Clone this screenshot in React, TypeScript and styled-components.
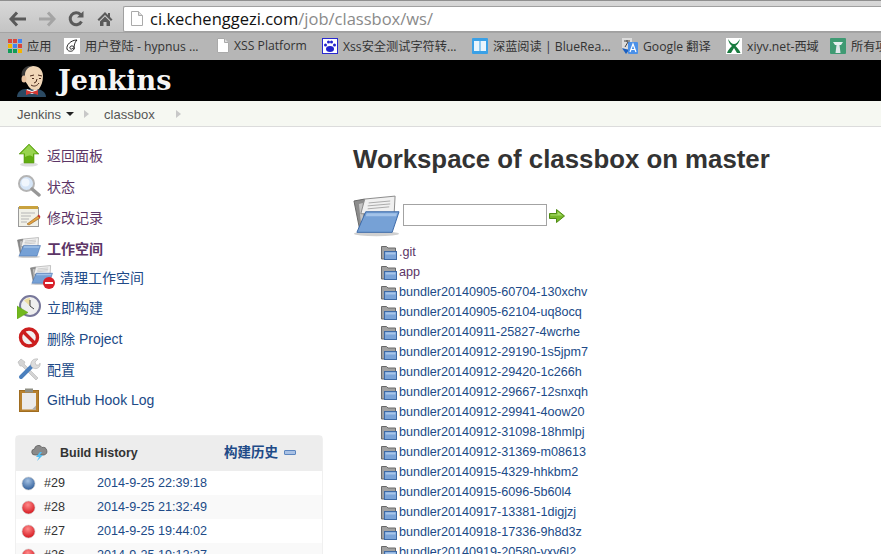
import React from "react"
import styled, { createGlobalStyle } from "styled-components"

const sans = `"Liberation Sans", Arial, "Noto Sans CJK SC", sans-serif`

const GlobalStyle = createGlobalStyle`
  html, body {
    margin: 0;
    padding: 0;
    height: 554px;
    overflow: hidden;
    background: #fff;
    font-family: ${sans};
  }
`

const files = [
  ".git",
  "app",
  "bundler20140905-60704-130xchv",
  "bundler20140905-62104-uq8ocq",
  "bundler20140911-25827-4wcrhe",
  "bundler20140912-29190-1s5jpm7",
  "bundler20140912-29420-1c266h",
  "bundler20140912-29667-12snxqh",
  "bundler20140912-29941-4oow20",
  "bundler20140912-31098-18hmlpj",
  "bundler20140912-31369-m08613",
  "bundler20140915-4329-hhkbm2",
  "bundler20140915-6096-5b60l4",
  "bundler20140917-13381-1digjzj",
  "bundler20140918-17336-9h8d3z",
  "bundler20140919-20580-yxy6l2",
]

const builds = [
  { id: "#29", date: "2014-9-25 22:39:18", ball: "blue" },
  { id: "#28", date: "2014-9-25 21:32:49", ball: "red" },
  { id: "#27", date: "2014-9-25 19:44:02", ball: "red" },
  { id: "#26", date: "2014-9-25 19:12:27", ball: "red" },
]

const Page = styled.div`
  width: 881px;
  height: 554px;
  overflow: hidden;
  display: flex;
  flex-direction: column;
`

/* browser chrome */
const Toolbar = styled.div`
  height: 32px;
  flex: none;
  box-sizing: border-box;
  border-top: 1px solid #8f8f8f;
  background: linear-gradient(#d8d8d8, #c4c4c4);
  display: flex;
  align-items: center;
  padding: 4px 0 0 3px;
`
const NavButton = styled.div`
  width: 29px;
  height: 22px;
  display: flex;
  align-items: center;
  justify-content: center;
`
const AddressBar = styled.div`
  margin-left: 4px;
  flex: 1;
  height: 26px;
  box-sizing: border-box;
  background: #fff;
  border: 1px solid #a0a0a0;
  border-right: 0;
  border-radius: 2px 0 0 2px;
  display: flex;
  align-items: center;
  padding-left: 7px;
  gap: 7px;
  font-family: "Open Sans", sans-serif;
  font-size: 16.5px;
  color: #8a8a8a;
`
const Host = styled.span`
  color: #111;
`
const BookmarkBar = styled.div`
  height: 28px;
  flex: none;
  box-sizing: border-box;
  background: #b6b6b6;
  border-top: 1px solid #a4a4a4;
  display: flex;
  align-items: center;
  padding: 0 0 2px 8px;
  overflow: hidden;
`
const Bookmark = styled.div<{ $width: number }>`
  width: ${({ $width }) => $width}px;
  flex: none;
  display: flex;
  align-items: center;
  gap: 5px;
  font-family: "Open Sans", "Noto Sans CJK SC", sans-serif;
  font-size: 12.2px;
  color: #333;
  white-space: nowrap;
`

/* jenkins header */
const Header = styled.div`
  height: 41px;
  flex: none;
  background: #000;
  display: flex;
  align-items: center;
  padding-left: 17px;
  gap: 11px;
`
const Brand = styled.div`
  font-family: "DejaVu Serif", Georgia, serif;
  font-weight: bold;
  font-size: 27px;
  color: #f5f5f5;
  line-height: 1;
`
const Breadcrumbs = styled.div`
  height: 26px;
  flex: none;
  box-sizing: border-box;
  background: #f6f8f2;
  border-bottom: 1px solid #dcdcdc;
  display: flex;
  align-items: center;
  padding: 1px 0 0 17px;
  color: #555;
`
const Crumb = styled.span`
  font-size: 13px;
`
const Caret = styled.span`
  margin-left: 5px;
  border-left: 4px solid transparent;
  border-right: 4px solid transparent;
  border-top: 4px solid #222;
`
const Chevron = styled.span<{ $gap: number; $after: number }>`
  margin-left: ${({ $gap }) => $gap}px;
  margin-right: ${({ $after }) => $after}px;
  border-top: 4px solid transparent;
  border-bottom: 4px solid transparent;
  border-left: 5px solid #c8c8c8;
`

/* page body */
const Body = styled.div`
  flex: 1;
  display: flex;
  min-height: 0;
`
const Sidebar = styled.div`
  width: 353px;
  flex: none;
  box-sizing: border-box;
  padding: 12px 0 0 15px;
`
const Task = styled.div<{ $sub?: boolean }>`
  height: ${({ $sub }) => ($sub ? 29 : 31)}px;
  margin-top: ${({ $sub }) => ($sub ? -1 : 0)}px;
  padding-left: ${({ $sub }) => ($sub ? 15 : 2)}px;
  display: flex;
  align-items: center;
  gap: 6px;
`
const TaskLabel = styled.span<{ $visited?: boolean; $bold?: boolean }>`
  font-size: 14px;
  font-weight: ${({ $bold }) => ($bold ? "bold" : "normal")};
  color: ${({ $visited }) => ($visited ? "#5c3566" : "#204a87")};
`
const History = styled.div`
  margin-top: 20px;
  width: 308px;
  box-sizing: border-box;
  border: 1px solid #f0f0f0;
  border-radius: 4px 4px 0 0;
`
const HistoryHead = styled.div`
  height: 35px;
  box-sizing: border-box;
  background: #ededed;
  display: flex;
  align-items: center;
  padding: 0 0 2px 15px;
  font-size: 12px;
  font-weight: bold;
  color: #333;
`
const HistoryTitle = styled.span`
  margin-left: 12px;
  font-size: 12.5px;
  width: 164px;
`
const HistoryLink = styled.span`
  margin-bottom: 3px;
  font-family: "Noto Sans CJK SC", sans-serif;
  font-size: 13.5px;
  font-weight: bold;
  color: #204a87;
`
const Collapse = styled.span`
  margin-left: 6px;
  width: 10px;
  height: 3px;
  background: #a9c1e4;
  border: 1px solid #5c86bf;
  border-radius: 1px;
`
const BuildRow = styled.div<{ $odd: boolean }>`
  height: 24px;
  box-sizing: border-box;
  background: ${({ $odd }) => ($odd ? "#f9f9f9" : "#fff")};
  display: flex;
  align-items: center;
  padding-left: 5px;
  font-size: 12.6px;
`
const BuildId = styled.span`
  margin-left: 8px;
  width: 53px;
  color: #333;
`
const BuildDate = styled.span`
  color: #204a87;
`
const Main = styled.div`
  flex: 1;
  min-width: 0;
`
const Title = styled.h1`
  margin: 16px 0 0;
  font-size: 25.8px;
  line-height: 32px;
  font-weight: bold;
  color: #333;
  white-space: nowrap;
`
const SearchRow = styled.div`
  margin-top: 20px;
  height: 42px;
  display: flex;
  align-items: center;
`
const SearchInput = styled.div`
  margin: 0 2px 2px 3px;
  width: 144px;
  height: 22px;
  box-sizing: border-box;
  border: 1px solid #a3a3a3;
  background: #fff;
`
const FileList = styled.div`
  margin-top: 5px;
  padding-left: 28px;
`
const FileRow = styled.div`
  height: 20px;
  display: flex;
  align-items: center;
  gap: 2px;
`
const FileName = styled.span<{ $visited: boolean }>`
  font-size: 12.6px;
  white-space: nowrap;
  color: ${({ $visited }) => ($visited ? "#5c3566" : "#204a87")};
`

/* drawings */
const SmallFolder = () => (
  <svg width="16" height="16" viewBox="0 0 16 16">
    <path d="M0.5 2.500h5l1.500 1.500h7.500v11H.5z" fill="#a2a2a2" stroke="#6a6a6a" />
    <rect x="3.500" y="7.500" width="12" height="8" fill="#7ba4d8" stroke="#3e6aa5" />
    <rect x="4.500" y="8.500" width="10" height="2" fill="#a8c6ea" />
  </svg>
)
const BigFolder = ({ size = 48 }: { size?: number }) => (
  <svg width={size} height={size * 0.88} viewBox="0 0 48 42">
    <ellipse cx="24" cy="39.500" rx="23" ry="2.500" fill="#d0d0d0" />
    <path d="M1 6l11-2 1 32H7z" fill="#8c8c8c" stroke="#666" />
    <path d="M6 9l4-1 1 28H9z" fill="#c4c4c4" />
    <path d="M12 4l31-3-1 18H8z" fill="#f0f0f0" stroke="#8a8a8a" />
    <path d="M16 8l22-2M15 11l23-2M15 14l22-2" stroke="#aaa" strokeWidth="1" />
    <path d="M13 17h34l-7 21H4z" fill="#76a1d6" stroke="#3a68a8" />
    <path d="M14 18.500h31l-1 3H13z" fill="#a3c3e9" />
  </svg>
)
const UpIcon = () => (
  <svg width="24" height="24" viewBox="0 0 24 24">
    <ellipse cx="12" cy="21.500" rx="9" ry="2" fill="#ddd" />
    <path d="M12 1L22 11h-5v9H7v-9H2z" fill="#62ad12" stroke="#5a9c14" strokeWidth=".6" />
    <path d="M12 2L4 10.500h4V14c3-2 6-2 8 0v-3.500h4z" fill="#98d44f" />
  </svg>
)
const SearchIcon = () => (
  <svg width="24" height="24" viewBox="0 0 24 24">
    <circle cx="9.500" cy="9.500" r="7.500" fill="#d5e5f7" stroke="#b4b4b4" strokeWidth="2" />
    <circle cx="8.500" cy="8.500" r="4" fill="#f0f6fd" />
    <path d="M15 15l7 6" stroke="#979797" strokeWidth="3.400" strokeLinecap="round" />
  </svg>
)
const NotepadIcon = () => (
  <svg width="24" height="24" viewBox="0 0 24 24">
    <rect x="1.500" y="2.500" width="20" height="19" fill="#f1f1e8" stroke="#9a9a9a" />
    <rect x="2" y="1" width="19" height="3" fill="#c9a23e" />
    <path d="M4 8h14M4 11h10M4 14h8M4 17h6" stroke="#b5b5b5" />
    <path d="M10 19l11-8 2 2-11 7z" fill="#e5a341" stroke="#8c5a1c" strokeWidth=".6" />
    <path d="M20.500 10.500l2 2.500 1-1-1.500-2.500z" fill="#c4342d" />
  </svg>
)
const ClockIcon = () => (
  <svg width="24" height="24" viewBox="0 0 24 24">
    <circle cx="13" cy="11" r="10" fill="#eeeeee" stroke="#77779a" strokeWidth="2" />
    <path d="M13 11V3a8 8 0 0 0-6 2.500z" fill="#ecdc9f" />
    <path d="M13 11V5M13 11l4 3" stroke="#444" />
    <path d="M0 11l11 6.500-11 6.500z" fill="#72b81f" stroke="#5c9c12" strokeWidth=".5" />
  </svg>
)
const NoIcon = () => (
  <svg width="24" height="24" viewBox="0 0 24 24">
    <circle cx="12" cy="11.500" r="8.500" fill="#f1f1f1" stroke="#cc1f1f" strokeWidth="3.400" />
    <path d="M6 5.500l12 12" stroke="#cc1f1f" strokeWidth="3.400" />
  </svg>
)
const ToolsIcon = () => (
  <svg width="24" height="24" viewBox="0 0 24 24">
    <path d="M4 2l4 3-1 2 14 14-2 2L5 9 3 9 1 5z" fill="#d4d4d4" stroke="#b4b4b4" strokeWidth=".6" />
    <path d="M4 20L15 9" stroke="#4a7fbd" strokeWidth="4" strokeLinecap="round" />
    <path d="M14 9c-1-4 2-8 7-7l-3 3 1 3 3 0 1-2c1 4-3 7-7 5z" fill="#dcdcdc" stroke="#b4b4b4" strokeWidth=".6" />
  </svg>
)
const ClipboardIcon = () => (
  <svg width="24" height="24" viewBox="0 0 24 24">
    <rect x="2.500" y="2.500" width="19" height="21" fill="#b8812e" stroke="#a06d20" />
    <rect x="5" y="5" width="14" height="16.500" fill="#ebebeb" />
    <rect x="8" y="0.500" width="8" height="4" fill="#8f8f84" />
    <path d="M15 21.500l4-4v4z" fill="#aaa" />
  </svg>
)
const StopBadge = styled.span`
  position: absolute;
  right: -1px;
  bottom: 0;
  width: 12px;
  height: 12px;
  border-radius: 50%;
  background: #d8202a;
  &::after {
    content: "";
    position: absolute;
    left: 2px;
    right: 2px;
    top: 5px;
    height: 2px;
    background: #fff;
  }
`
const BadgedIcon = styled.div`
  position: relative;
  width: 24px;
  height: 24px;
`
const CleanFolderIcon = () => (
  <BadgedIcon>
    <BigFolder size={23} />
    <StopBadge />
  </BadgedIcon>
)
const Ball = ({ color }: { color: string }) => {
  const [light, dark] = color === "red" ? ["#ff8a8a", "#d81f26"] : ["#a5c2e3", "#38659f"]
  return (
    <svg width="15" height="15" viewBox="0 0 15 15">
      <defs>
        <radialGradient id={`ball-${color}`} cx="45%" cy="30%" r="65%">
          <stop offset="0" stopColor={light} />
          <stop offset="1" stopColor={dark} />
        </radialGradient>
      </defs>
      <circle cx="7.500" cy="7.500" r="6.500" fill={`url(#ball-${color})`} stroke="#ccc" strokeWidth=".6" />
    </svg>
  )
}
const CloudIcon = () => (
  <svg width="17" height="17" viewBox="0 0 17 17">
    <path d="M4 11a3 3 0 0 1-.5-6A4 4 0 0 1 11 3.500a3.500 3.500 0 0 1 2 7.500z" fill="#8a8a8a" stroke="#555" strokeWidth=".7" />
    <path d="M9 8l-4 5h3l-2 4 6-6H9l2-3z" fill="#54bdf0" />
  </svg>
)
const GoArrow = () => (
  <svg width="16" height="16" viewBox="0 0 16 16">
    <path d="M.5 5.500h7V1.500L15.500 8l-8 6.500v-4h-7z" fill="#76b72a" stroke="#4e8a12" />
    <path d="M1.500 6.500h7V3.500l5 4H1.500z" fill="#a8dc6a" />
  </svg>
)
const Back = () => (
  <svg width="18" height="16" viewBox="0 0 18 16">
    <path d="M8 1.500L2 8l6 6.500M2.500 8H17" fill="none" stroke="#5a5a5a" strokeWidth="3" />
  </svg>
)
const Forward = () => (
  <svg width="18" height="16" viewBox="0 0 18 16">
    <path d="M10 1.500L16 8l-6 6.500M15.500 8H1" fill="none" stroke="#a4a4a4" strokeWidth="3" />
  </svg>
)
const Reload = () => (
  <svg width="16" height="16" viewBox="0 0 16 16">
    <path d="M13.500 10.500A6 6 0 1 1 12.500 3.500" fill="none" stroke="#5a5a5a" strokeWidth="3" />
    <path d="M9 6.500h6.500V0z" fill="#5a5a5a" />
  </svg>
)
const Home = () => (
  <svg width="16" height="16" viewBox="0 0 16 16">
    <path d="M8 1L0.500 8.500 2 10l6-6 6 6 1.500-1.500L13 6V2h-2v2z" fill="#5a5a5a" />
    <path d="M3 10.500L8 5.500l5 5V15H9.500v-4h-3v4H3z" fill="#5a5a5a" />
  </svg>
)
const PageIcon = () => (
  <svg width="12" height="15" viewBox="0 0 12 15">
    <path d="M.5.500h7l4 4v10H.5z" fill="#fff" stroke="#aaa" />
    <path d="M7.500.500v4h4" fill="#ddd" stroke="#aaa" />
  </svg>
)
const AppsIcon = () => (
  <svg width="14" height="14" viewBox="0 0 14 14">
    {["#d9473c", "#d9473c", "#4184f3", "#f4b400", "#4184f3", "#d9473c", "#0f9d58", "#0f9d58", "#f4b400"].map((c, i) => (
      <rect key={i} x={(i % 3) * 5} y={Math.floor(i / 3) * 5} width="4" height="4" fill={c} />
    ))}
  </svg>
)
const HypnusIcon = () => (
  <svg width="16" height="16" viewBox="0 0 16 16">
    <rect width="16" height="16" fill="#fff" />
    <path d="M13 2C7 2 2 7 3 11c1 3 6 3 7 0s-3-4-4-2 2 3 3 1M13 2c-3 3-3 7-3 9" fill="none" stroke="#222" />
  </svg>
)
const BaiduIcon = () => (
  <svg width="16" height="16" viewBox="0 0 16 16">
    <rect x=".5" y=".5" width="15" height="15" fill="#fff" stroke="#2a2ad0" />
    <ellipse cx="8" cy="11" rx="4" ry="3" fill="#2222cc" />
    <circle cx="3.500" cy="7" r="1.500" fill="#2222cc" />
    <circle cx="6.500" cy="4" r="1.500" fill="#2222cc" />
    <circle cx="9.500" cy="4" r="1.500" fill="#2222cc" />
    <circle cx="12.500" cy="7" r="1.500" fill="#2222cc" />
  </svg>
)
const BookIcon = () => (
  <svg width="16" height="16" viewBox="0 0 16 16">
    <rect width="16" height="16" rx="1" fill="#3aa0e6" />
    <path d="M2 3h5.500v10H2zM8.500 3H14v10H8.500z" fill="#e8f5fd" />
  </svg>
)
const TranslateIcon = () => (
  <svg width="16" height="16" viewBox="0 0 16 16">
    <rect x="0" y="0" width="10" height="11" fill="#dcdcdc" />
    <path d="M2 3h6M5 2v2M3 9l3-5 2 3" fill="none" stroke="#444" />
    <path d="M0 10l4 6 3-4z" fill="#1a5fc0" />
    <rect x="6" y="4" width="10" height="12" rx="1" fill="#4a90e8" />
    <path d="M8 14l3-8 3 8M9 11.500h4" fill="none" stroke="#fff" strokeWidth="1.200" />
  </svg>
)
const XiyvIcon = () => (
  <svg width="16" height="16" viewBox="0 0 16 16">
    <rect width="16" height="16" fill="#fff" />
    <path d="M2 1c2 3 4 5 6 5s4-2 6-5c-1 4-3 6-4.500 7 1.500 1.500 4 4 5 7H11L8 10l-3 5H1c1-3 3.500-5.500 5-7C4.500 7 3 5 2 1z" fill="#177a3e" />
  </svg>
)
const TowerIcon = () => (
  <svg width="16" height="16" viewBox="0 0 16 16">
    <rect width="16" height="16" rx="1" fill="#3f9a73" />
    <path d="M3 4h10l-2 3H5z" fill="#e6eef0" />
    <path d="M6.500 7h3l1 8h-5z" fill="#dfe7ea" />
  </svg>
)
const Butler = () => (
  <svg width="30" height="32" viewBox="0 0 30 32">
    <path d="M0 32c0-5 4-8 9-8h10c5 0 10 3 10 8z" fill="#2b4a63" />
    <path d="M10 24l5 2 5-2 1 3-6 2-6-2z" fill="#fff" />
    <path d="M9 25l6 2 6-2v5l-6-2-6 2z" fill="#d33833" />
    <path d="M5 11C5 4 10 1 16 1s10 4 10 10c0 6-2 10-4 13-4 2-8 1-10-2-2-3-3-5-7-11z" fill="#f0d6b7" />
    <path d="M5 12C3 5 9 0 16 1c-6 1-8 5-8 9 0 3-1 5-1 7-1-1-2-3-2-5z" fill="#3a3a3a" />
    <ellipse cx="7" cy="14" rx="2.500" ry="3.500" fill="#e8c2a0" />
    <path d="M13 11l4-1M21 10l4 1M15 13.500h2M22 13.500h2M20 14l-1 3-2 1M14 20c3 2 6 1 8-2" stroke="#49291b" fill="none" />
  </svg>
)

const tasks = [
  { label: "返回面板", icon: <UpIcon />, visited: true },
  { label: "状态", icon: <SearchIcon />, visited: true },
  { label: "修改记录", icon: <NotepadIcon />, visited: true },
  { label: "工作空间", icon: <BigFolder size={24} />, visited: true, bold: true },
  { label: "清理工作空间", icon: <CleanFolderIcon />, sub: true },
  { label: "立即构建", icon: <ClockIcon /> },
  { label: "删除 Project", icon: <NoIcon /> },
  { label: "配置", icon: <ToolsIcon /> },
  { label: "GitHub Hook Log", icon: <ClipboardIcon /> },
]

const App = () => (
  <Page>
    <GlobalStyle />
    <Toolbar>
      <NavButton><Back /></NavButton>
      <NavButton><Forward /></NavButton>
      <NavButton><Reload /></NavButton>
      <NavButton><Home /></NavButton>
      <AddressBar>
        <PageIcon />
        <span><Host>ci.kechenggezi.com</Host>/job/classbox/ws/</span>
      </AddressBar>
    </Toolbar>
    <BookmarkBar>
      <Bookmark $width={56}><AppsIcon />应用</Bookmark>
      <Bookmark $width={153}><HypnusIcon />用户登陆 - hypnus ...</Bookmark>
      <Bookmark $width={105}><PageIcon />XSS Platform</Bookmark>
      <Bookmark $width={150}><BaiduIcon />Xss安全测试字符转...</Bookmark>
      <Bookmark $width={150}><BookIcon />深蓝阅读 | BlueRea...</Bookmark>
      <Bookmark $width={104}><TranslateIcon />Google 翻译</Bookmark>
      <Bookmark $width={104}><XiyvIcon />xiyv.net-西域</Bookmark>
      <Bookmark $width={60}><TowerIcon />所有项</Bookmark>
    </BookmarkBar>
    <Header>
      <Butler />
      <Brand>Jenkins</Brand>
    </Header>
    <Breadcrumbs>
      <Crumb>Jenkins</Crumb>
      <Caret />
      <Chevron $gap={10} $after={15} />
      <Crumb>classbox</Crumb>
      <Chevron $gap={21} $after={0} />
    </Breadcrumbs>
    <Body>
      <Sidebar>
        {tasks.map((t) => (
          <Task key={t.label} $sub={t.sub}>
            {t.icon}
            <TaskLabel $visited={t.visited} $bold={t.bold}>{t.label}</TaskLabel>
          </Task>
        ))}
        <History>
          <HistoryHead>
            <CloudIcon />
            <HistoryTitle>Build History</HistoryTitle>
            <HistoryLink>构建历史</HistoryLink>
            <Collapse />
          </HistoryHead>
          {builds.map((b, i) => (
            <BuildRow key={b.id} $odd={i % 2 === 1}>
              <Ball color={b.ball} />
              <BuildId>{b.id}</BuildId>
              <BuildDate>{b.date}</BuildDate>
            </BuildRow>
          ))}
        </History>
      </Sidebar>
      <Main>
        <Title>Workspace of classbox on master</Title>
        <SearchRow>
          <BigFolder size={47} />
          <SearchInput />
          <GoArrow />
        </SearchRow>
        <FileList>
          {files.map((f, i) => (
            <FileRow key={f}>
              <SmallFolder />
              <FileName $visited={i < 2}>{f}</FileName>
            </FileRow>
          ))}
        </FileList>
      </Main>
    </Body>
  </Page>
)

export default App
